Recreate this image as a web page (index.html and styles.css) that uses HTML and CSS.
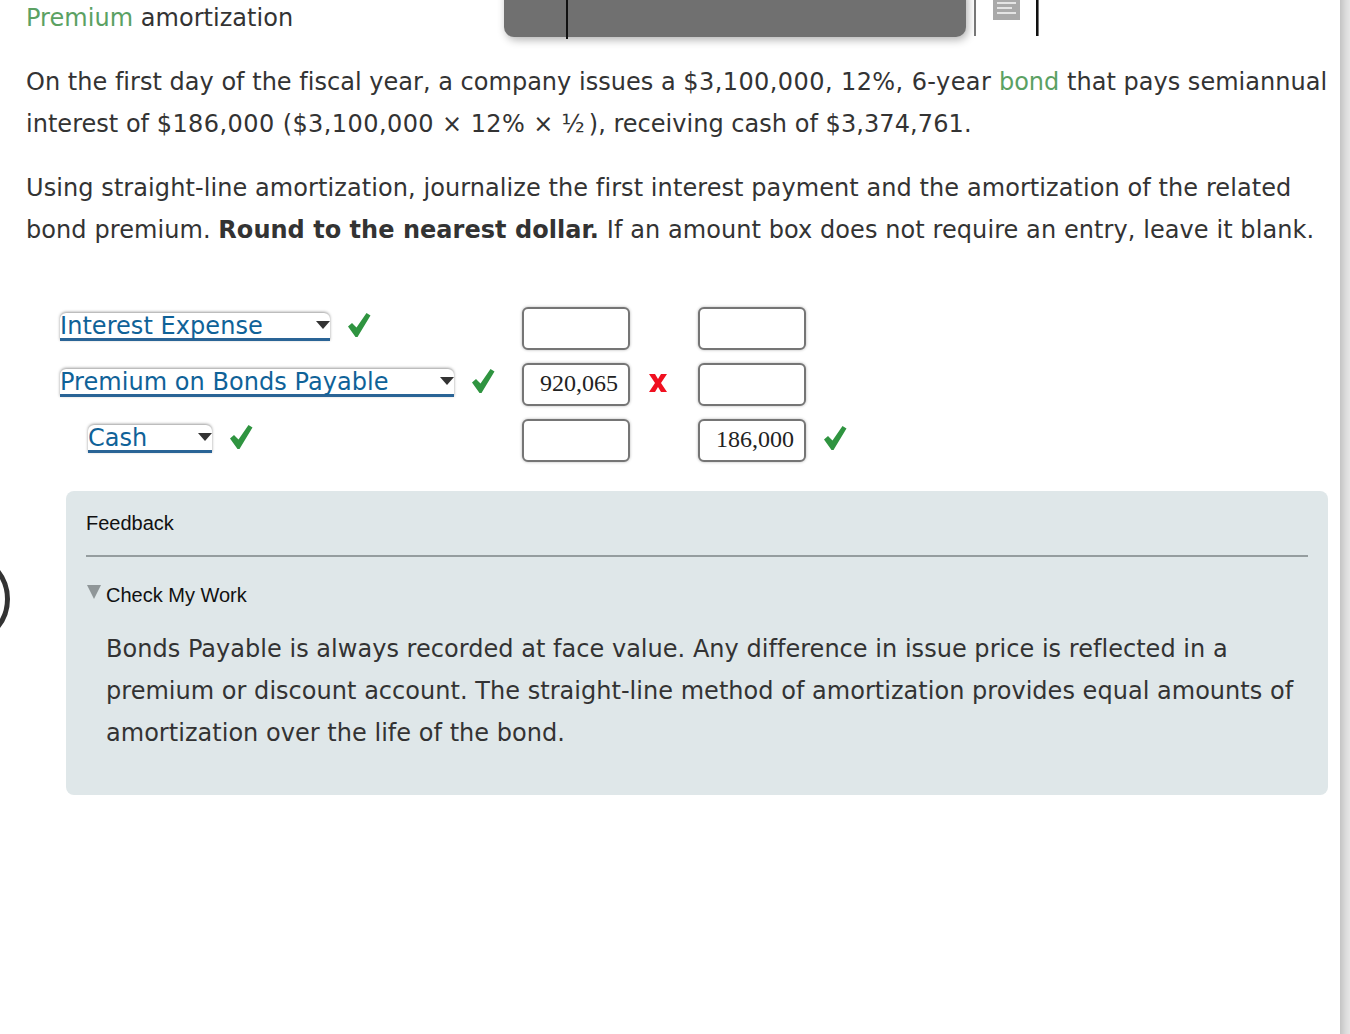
FILE: index.html
```html
<!DOCTYPE html>
<html lang="en">
<head>
<meta charset="utf-8">
<title>Premium amortization</title>
<link rel="stylesheet" href="styles.css">
</head>
<body>
<div class="page">
  <main class="content">
    <div class="toolbar" aria-hidden="true">
      <div class="tool-panel"></div>
      <div class="tool-tick tick-a"></div>
      <div class="tool-sep"></div>
      <svg class="tool-icon" width="28" height="21" viewBox="0 0 28 21"><rect width="27" height="20" fill="#a9a9a9"/><rect x="4" y="2" width="19" height="2" fill="#e4e4e4"/><rect x="4" y="7" width="15" height="2" fill="#e4e4e4"/><rect x="4" y="12" width="19" height="2" fill="#e4e4e4"/></svg>
      <div class="tool-bar"></div>
    </div>
    <div class="side-ring" aria-hidden="true"></div>

    <h1 class="title"><span class="term">Premium</span> amortization</h1>
    <p class="para first">On the first day of the fiscal year, a company issues a <span class="num">$3,100,000, 12%, 6-year</span> <span class="term">bond</span> that pays semiannual interest of <span class="num">$186,000 ($3,100,000 × 12% ×</span> <span class="frac">½</span>), receiving cash of <span class="num-end">$3,374,761.</span></p>
    <p class="para second">Using straight-line amortization, journalize the first interest payment and the amortization of the related bond premium. <strong>Round to the nearest dollar.</strong> If an amount box does not require an entry, leave it blank.</p>

    <div class="journal">
      <div class="row">
        <div class="account"><span class="select w270">Interest Expense<i class="caret"></i></span><svg class="mark" width="26" height="26" viewBox="0 0 26 26"><path d="M2 14.500L6 11L10.500 15.500L20.500 1L24.500 3.500L11.500 25H9.500Z" fill="#2f9440"/></svg></div>
        <div class="cell"><span class="box"></span></div>
        <div class="cell"><span class="box"></span></div>
      </div>
      <div class="row">
        <div class="account"><span class="select w394">Premium on Bonds Payable<i class="caret"></i></span><svg class="mark" width="26" height="26" viewBox="0 0 26 26"><path d="M2 14.500L6 11L10.500 15.500L20.500 1L24.500 3.500L11.500 25H9.500Z" fill="#2f9440"/></svg></div>
        <div class="cell"><span class="box">920,065</span><svg class="mark-x" width="20" height="20" viewBox="0 0 20 20"><path d="M1 1H7L10 6L13 1H19L13 10L19 19H13L10 14L7 19H1L7 10Z" fill="#f01020"/></svg></div>
        <div class="cell"><span class="box"></span></div>
      </div>
      <div class="row">
        <div class="account indent"><span class="select w124">Cash<i class="caret"></i></span><svg class="mark" width="26" height="26" viewBox="0 0 26 26"><path d="M2 14.500L6 11L10.500 15.500L20.500 1L24.500 3.500L11.500 25H9.500Z" fill="#2f9440"/></svg></div>
        <div class="cell"><span class="box"></span></div>
        <div class="cell"><span class="box">186,000</span><svg class="mark" width="26" height="26" viewBox="0 0 26 26"><path d="M2 14.500L6 11L10.500 15.500L20.500 1L24.500 3.500L11.500 25H9.500Z" fill="#2f9440"/></svg></div>
      </div>
    </div>

    <section class="feedback">
      <h2 class="fb-title">Feedback</h2>
      <div class="fb-head"><i class="tri"></i><span>Check My Work</span></div>
      <p class="fb-text">Bonds Payable is always recorded at face value. Any difference in issue price is reflected in a premium or discount account. The straight-line method of amortization provides equal amounts of amortization over the life of the bond.</p>
    </section>
  </main>
  <div class="scrollbar"></div>
</div>
</body>
</html>
```
FILE: styles.css
```css
* { box-sizing: border-box; }
html, body { margin: 0; height: 100%; background: #fff; overflow: hidden; }
body { font-family: "DejaVu Sans", Verdana, sans-serif; color: #333; font-variant-ligatures: none; }
.page { display: flex; height: 1034px; }
.content { position: relative; flex: 1; padding: 0 6px 0 26px; overflow: hidden; }
.scrollbar { width: 10px; background: linear-gradient(to right, #c4c4c4, #dcdcdc 60%, #e6e6e6); }

.title { margin: 0; font-weight: 400; font-size: 24px; line-height: 36px; letter-spacing: .04px; }
.term { color: #5ba163; }
.para { margin: 0; font-size: 24px; line-height: 42px; letter-spacing: .02px; }
.para.first { margin-top: 25px; }
.para.second { margin-top: 22px; letter-spacing: .08px; }
.para strong { letter-spacing: .03px; }
.num { letter-spacing: .42px; }
.num-end { letter-spacing: .1px; }
.frac { letter-spacing: 4px; }

.journal { margin-top: 56px; display: flex; flex-direction: column; gap: 14px; }
.row { display: grid; grid-template-columns: 496px 176px 1fr; height: 42px; }
.account { display: flex; align-items: flex-start; padding-left: 34px; gap: 16px; }
.account.indent { padding-left: 62px; }
.select { position: relative; display: block; height: 28px; margin-top: 6px; font-size: 24px; line-height: 26px; letter-spacing: .05px; color: #0f6298; border-bottom: 3px solid #2a6496; border-radius: 6px 6px 0 0; box-shadow: 0 -1px 3px rgba(0,0,0,.4); white-space: nowrap; }
.w270 { width: 270px; }
.w394 { width: 394px; }
.w124 { width: 124px; }
.caret { position: absolute; right: 0; top: 8px; width: 0; height: 0; border-left: 7px solid transparent; border-right: 7px solid transparent; border-top: 8px solid #333; }
.mark { flex: none; margin-top: 5px; }
.cell { display: flex; align-items: center; }
.cell .mark { margin: -6px 0 0 16px; }
.mark-x { margin: -3px 0 0 18px; flex: none; }
.box { display: block; width: 108px; height: 43px; border: 2px solid #757575; border-radius: 6px; background: #fff; box-shadow: 0 0 3px rgba(0,0,0,.3); font-family: "Liberation Serif", serif; font-size: 24px; line-height: 37px; text-align: right; padding-right: 10px; color: #222; }

.feedback { margin-top: 30px; width: 1262px; margin-left: 40px; height: 304px; padding: 20px 20px 0; background: #dfe7e9; border-radius: 8px; }
.fb-title { margin: 0; padding-bottom: 19px; border-bottom: 2px solid #959d9f; font: 400 20px/25px "Liberation Sans", Arial, sans-serif; color: #111; }
.fb-head { display: flex; margin-top: 25px; font: 400 20px/26px "Liberation Sans", Arial, sans-serif; color: #111; }
.tri { width: 0; height: 0; margin: 3px 5px 0 1px; border-left: 7.500px solid transparent; border-right: 7.500px solid transparent; border-top: 14px solid #8f9698; }
.fb-text { margin: 20px 0 0 20px; font-size: 24px; line-height: 42px; letter-spacing: .03px; color: #333; }

.toolbar { position: absolute; left: 0; top: 0; width: 100%; height: 40px; }
.tool-panel { position: absolute; left: 504px; top: -10px; width: 462px; height: 47px; background: #707070; border-radius: 0 0 10px 10px; box-shadow: 2px 3px 8px rgba(0,0,0,.3); }
.tool-tick { position: absolute; background: #111; }
.tick-a { left: 566px; top: 0; width: 2px; height: 39px; }
.tool-sep { position: absolute; left: 974px; top: 0; width: 2px; height: 36px; background: #777; }
.tool-icon { position: absolute; left: 993px; top: 0; }
.tool-bar { position: absolute; left: 1036px; top: 0; width: 3px; height: 36px; background: linear-gradient(to right, #111 60%, #777 60%); }
.side-ring { position: absolute; left: -84px; top: 552px; width: 94px; height: 94px; border: 5px solid #333; border-radius: 50%; }
```
